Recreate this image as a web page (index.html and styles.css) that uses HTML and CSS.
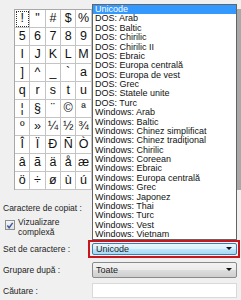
FILE: index.html
```html
<!DOCTYPE html>
<html lang="ro">
<head>
  <meta charset="UTF-8" />
  <title>Hartă caractere</title>
  <link rel="stylesheet" href="styles.css">
</head>
<body>

  <div class="charmap">
    <div class="cells" id="cells"></div>
    <div class="scrollbar"></div>
  </div>

  <div class="fields">
    <div class="row copy-row">
      <span class="label">Caractere de copiat :</span>
      <span class="textbox"></span>
    </div>
    <div class="check-row">
      <span class="checkbox">
        <svg width="9" height="9" viewBox="0 0 9 9"><path d="M1.5 4.5 L3.5 7 L7.5 1.5" fill="none" stroke="#3b5aa0" stroke-width="1.6"/></svg>
      </span>
      <span class="check-label">Vizualizare<br>complexă</span>
    </div>
    <div class="row set-row">
      <span class="label">Set de caractere :</span>
      <span class="highlight">
        <span class="select active">Unicode<span class="arrow"></span></span>
      </span>
    </div>
    <div class="row">
      <span class="label">Grupare după :</span>
      <span class="select">Toate<span class="arrow"></span></span>
    </div>
    <div class="row">
      <span class="label">Căutare :</span>
      <span class="textbox"></span>
    </div>
  </div>

  <ul class="dropdown">
    <li class="selected">Unicode</li>
    <li>DOS: Arab</li>
    <li>DOS: Baltic</li>
    <li>DOS: Chirilic</li>
    <li>DOS: Chirilic II</li>
    <li>DOS: Ebraic</li>
    <li>DOS: Europa centrală</li>
    <li>DOS: Europa de vest</li>
    <li>DOS: Grec</li>
    <li>DOS: Statele unite</li>
    <li>DOS: Turc</li>
    <li>Windows: Arab</li>
    <li>Windows: Baltic</li>
    <li>Windows: Chinez simplificat</li>
    <li>Windows: Chinez tradiţional</li>
    <li>Windows: Chirilic</li>
    <li>Windows: Coreean</li>
    <li>Windows: Ebraic</li>
    <li>Windows: Europa centrală</li>
    <li>Windows: Grec</li>
    <li>Windows: Japonez</li>
    <li>Windows: Thai</li>
    <li>Windows: Turc</li>
    <li>Windows: Vest</li>
    <li>Windows: Vietnam</li>
  </ul>

  <script>
    // visible columns only; the rest sit under the open list
    const rows = [
      '!"#$%', "56789", "IJKLM", "]^_`a", "qrstu",
      "¦§¨©ª", "º»¼½¾", "ÎÏÐÑÒ", "âãäåæ", "ö÷øùú"
    ];
    const cells = document.getElementById("cells");
    rows.forEach((row, r) => {
      for (let c = 0; c < 15; c++) {
        const cell = document.createElement("div");
        cell.className = "cell";
        if (r === 0 && c === 0) cell.classList.add("focus");
        if (c < row.length) cell.textContent = row[c];
        cells.appendChild(cell);
      }
    });
  </script>

</body>
</html>
```

FILE: styles.css
```css
body {
  margin: 0;
  width: 241px;
  height: 300px;
  overflow: hidden;
  position: relative;
  background: #f0f0f0;
  font-family: "Liberation Sans", Arial, sans-serif;
  color: #1e1e1e;
}

.charmap {
  display: flex;
  padding-top: 9px;
  height: 181px;
}
.cells {
  margin-left: 14px;
  flex: 1;
  overflow: hidden;
  display: grid;
  grid-template-columns: repeat(15, 15.35px);
  grid-auto-rows: 18px;
  border-top: 1px solid #a8a8a8;
  border-left: 1px solid #a8a8a8;
  align-content: start;
}
.cell {
  box-sizing: border-box;
  background: #fff;
  border-right: 1px solid #c4c4c4;
  border-bottom: 1px solid #c4c4c4;
  font-size: 12.5px;
  line-height: 17px;
  text-align: center;
  color: #111;
}
.cell.focus {
  outline: 1px dotted #333;
  outline-offset: -2px;
}
.scrollbar {
  width: 4px;
  background: #a9a9a9;
}

.fields {
  padding: 11px 4px 0 3px;
  font-size: 8.5px;
}
.row {
  display: flex;
  align-items: center;
  height: 21px;
}
.label {
  width: 89px;
  flex: none;
}
.copy-row {
  height: 14px;
}
.check-row {
  display: flex;
  align-items: flex-start;
  height: 21px;
  margin-top: 2px;
  line-height: 10px;
  padding-left: 2px;
}
.checkbox {
  box-sizing: border-box;
  width: 10px;
  height: 10px;
  margin-top: 3px;
  margin-right: 3px;
  border: 1px solid #8f8f8f;
  background: linear-gradient(#f4f4f4, #e2e2e2);
  display: flex;
  align-items: center;
  justify-content: center;
}
.checkbox svg {
  display: block;
}
.textbox {
  flex: 1;
  height: 15px;
  box-sizing: border-box;
  border: 1px solid #d9d9d9;
  background: #fff;
}
.set-row .label {
  width: 85px;
}
.highlight {
  flex: 1;
  box-sizing: border-box;
  height: 18px;
  border: 2px solid #c8161d;
  padding: 1px 1px 1px 2px;
  margin-right: -3px;
}
.select {
  flex: 1;
  box-sizing: border-box;
  height: 16px;
  display: flex;
  align-items: center;
  padding-left: 3px;
  border: 1px solid #8a8a8a;
  border-radius: 2px;
  background: linear-gradient(#f3f3f3 0%, #ebebeb 50%, #dddddd 51%, #cfcfcf 100%);
  font-size: 9px;
}
.highlight .select {
  height: 12px;
}
.select.active {
  border-color: #3c7fb1;
  background: linear-gradient(#eaf6fd 0%, #d9f0fc 50%, #bee6fd 51%, #a7d9f5 100%);
}
.arrow {
  margin-left: auto;
  margin-right: 4px;
  width: 0;
  height: 0;
  border-left: 3px solid transparent;
  border-right: 3px solid transparent;
  border-top: 3px solid #111;
}

.dropdown {
  position: absolute;
  left: 92px;
  top: 4px;
  width: 145px;
  height: 236px;
  box-sizing: border-box;
  margin: 0;
  padding: 0;
  list-style: none;
  background: #fff;
  border: 1px solid #646464;
  font-size: 9px;
  overflow: hidden;
}
.dropdown li {
  height: 9.38px;
  line-height: 9.38px;
  padding-left: 2px;
  white-space: nowrap;
  color: #111;
}
.dropdown li.selected {
  background: #3399ff;
  color: #fff;
}
```
